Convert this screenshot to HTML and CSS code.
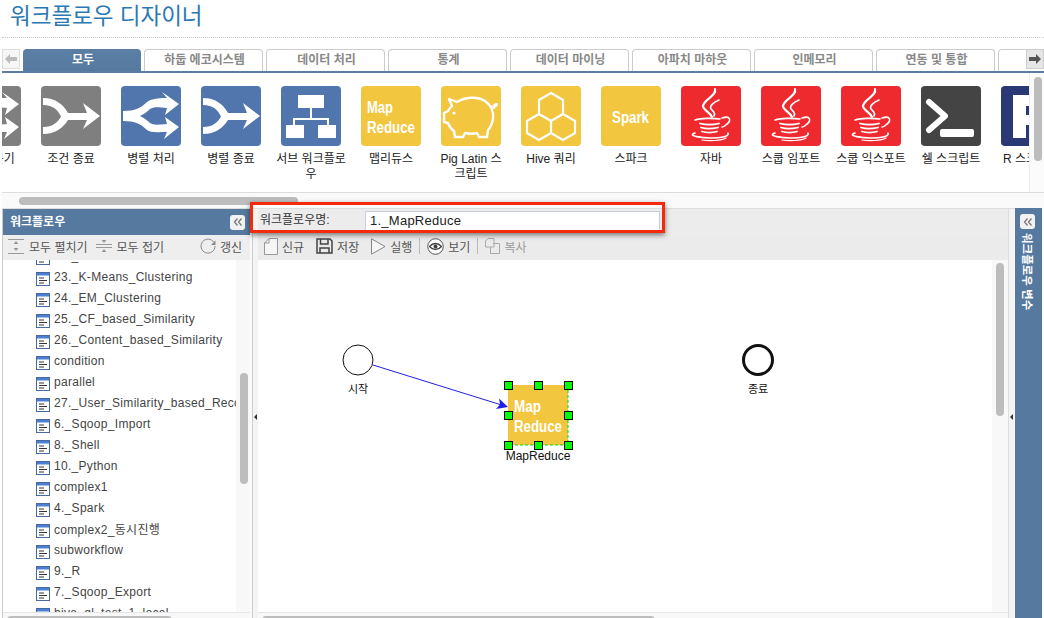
FILE: index.html
```html
<!DOCTYPE html>
<html lang="ko">
<head>
    <meta charset="UTF-8">
    <meta name="viewport" content="width=device-width, initial-scale=1.0">
    <title>워크플로우 디자이너</title>
    <link rel="stylesheet" href="styles.css">
</head>
<body>
    <svg class="defs" width="0" height="0">
        <symbol id="split" viewBox="0 0 60 60">
            <path fill="#fff" d="M2 25C14 25 20 22 26 16C30 13 36 12 46 12L41 6L58 18L44 29L46 22C36 21 32 21 29 23C26 26 23 28 19 30C23 32 26 34 29 37C32 39 36 39 46 38L44 31L58 41L43 53L46 46C36 46 30 47 26 44C20 38 14 35 2 35Z"/>
        </symbol>
        <symbol id="merge" viewBox="0 0 60 60">
            <path fill="#fff" d="M2 12C14 12 22 18 27 27L46 27L42 17L59 30L42 43L46 34L27 34C22 42 14 48 2 48L2 41C12 41 17 36 20 30.500C17 24 12 19 2 19Z"/>
        </symbol>
        <symbol id="java" viewBox="0 0 60 60">
            <g fill="none" stroke="#fff" stroke-linecap="round">
                <path stroke-width="2.200" d="M34 3C36 10 23 13 22 20C22 24 29 26 31 31"/>
                <path stroke-width="1.600" d="M38 14C33 16 28 20 30 23C32 25 35 27 33 30"/>
                <path stroke-width="1.600" d="M14 34C20 32 32 32 39 33"/>
                <path stroke-width="1.800" d="M19 37.500C25 39 32 39 38 37.500"/>
                <path stroke-width="1.800" d="M20 41.500C25 43 31 43 37 41.500"/>
                <path stroke-width="1.800" d="M21 45.500C26 47 31 47 36 45.500"/>
                <path stroke-width="1.600" d="M41 32C50 29 50 35 46 38C44 40 43 41 41 41"/>
                <path stroke-width="1.600" d="M14 47C5 50 22 52 30 52C38 52 49 51 47 47"/>
                <path stroke-width="1.200" d="M21 54C28 55 40 55 45 52"/>
            </g>
        </symbol>
        <symbol id="doc" viewBox="0 0 14 14">
            <rect x="0.5" y="0.5" width="13" height="13" fill="#fff" stroke="#46699f"/>
            <rect x="1" y="1" width="12" height="2.500" fill="#4d7fd0"/>
            <path stroke="#333" d="M3 6H8M3 8.500H11M3 11H8" fill="none"/>
        </symbol>
        <symbol id="collapse" viewBox="0 0 14 14">
            <path fill="none" stroke="#777" stroke-width="1.300" d="M6.500 3.500L3.500 7L6.500 10.500M10.500 3.500L7.500 7L10.500 10.500"/>
        </symbol>
    </svg>

    <header class="page-head">
        <h1 class="page-title">워크플로우 디자이너</h1>
    </header>

    <div class="tabbar">
        <button class="tab-arrow tab-arrow-left">
            <svg width="12" height="10" viewBox="0 0 12 10"><path fill="#bbb" d="M0 5L5 0V3H12V7H5V10Z"/></svg>
        </button>
        <div class="tabs">
            <div class="tab tab-active">모두</div>
            <div class="tab">하둡 에코시스템</div>
            <div class="tab">데이터 처리</div>
            <div class="tab">통계</div>
            <div class="tab">데이터 마이닝</div>
            <div class="tab">아파치 마하웃</div>
            <div class="tab">인메모리</div>
            <div class="tab">연동 및 통합</div>
            <div class="tab"></div>
        </div>
        <button class="tab-arrow tab-arrow-right">
            <svg width="12" height="10" viewBox="0 0 12 10"><path fill="#555" d="M12 5L7 0V3H0V7H7V10Z"/></svg>
        </button>
    </div>

    <section class="palette">
        <div class="palette-view">
            <div class="palette-track">
                <div class="tool">
                    <svg class="tool-icon icon-gray"><use href="#split"/></svg>
                    <span class="tool-label">조건 분기</span>
                </div>
                <div class="tool">
                    <svg class="tool-icon icon-gray"><use href="#merge"/></svg>
                    <span class="tool-label">조건 종료</span>
                </div>
                <div class="tool">
                    <svg class="tool-icon icon-blue"><use href="#split"/></svg>
                    <span class="tool-label">병렬 처리</span>
                </div>
                <div class="tool">
                    <svg class="tool-icon icon-blue"><use href="#merge"/></svg>
                    <span class="tool-label">병렬 종료</span>
                </div>
                <div class="tool">
                    <svg class="tool-icon icon-blue" viewBox="0 0 60 60">
                        <path fill="#fff" d="M17 9H43V22H17ZM5 39H23V52H5ZM37 39H55V52H37Z"/>
                        <path fill="none" stroke="#fff" stroke-width="2" d="M30 22V33M13 39V33H47V39"/>
                    </svg>
                    <span class="tool-label">서브 워크플로우</span>
                </div>
                <div class="tool">
                    <svg class="tool-icon icon-yellow" viewBox="0 0 60 60">
                        <text class="icon-text" x="6" y="27" textLength="26" lengthAdjust="spacingAndGlyphs">Map</text>
                        <text class="icon-text" x="6" y="47" textLength="48" lengthAdjust="spacingAndGlyphs">Reduce</text>
                    </svg>
                    <span class="tool-label">맵리듀스</span>
                </div>
                <div class="tool">
                    <svg class="tool-icon icon-yellow" viewBox="0 0 60 60">
                        <path fill="none" stroke="#fff" stroke-width="2.400" stroke-linejoin="round" d="M8 13L16 16C24 11 36 10 44 15C50 19 53 26 52 33C51 38 49 42 47 44L46 51H38L36 47C32 48 28 48 24 47L22 51H14L13 45C10 43 8 40 7 37L3 36V27L7 25C8 23 10 21 11 20Z"/>
                        <path fill="none" stroke="#fff" stroke-width="2" d="M50 20C53 22 56 21 56 18C54 18 52 19 53 23"/>
                        <circle cx="13" cy="27" r="1.600" fill="#fff"/>
                    </svg>
                    <span class="tool-label">Pig Latin 스크립트</span>
                </div>
                <div class="tool">
                    <svg class="tool-icon icon-yellow" viewBox="0 0 60 60">
                        <path fill="none" stroke="#fff" stroke-width="2.200" d="M30 7L42 14V28L30 35L18 28V14ZM18 28L30 35V47L18 54L6 47V35ZM42 28L54 35V47L42 54L30 47V35Z"/>
                    </svg>
                    <span class="tool-label">Hive 쿼리</span>
                </div>
                <div class="tool">
                    <svg class="tool-icon icon-yellow" viewBox="0 0 60 60">
                        <text class="icon-text" x="11" y="37" textLength="37" lengthAdjust="spacingAndGlyphs">Spark</text>
                    </svg>
                    <span class="tool-label">스파크</span>
                </div>
                <div class="tool">
                    <svg class="tool-icon icon-red"><use href="#java"/></svg>
                    <span class="tool-label">자바</span>
                </div>
                <div class="tool">
                    <svg class="tool-icon icon-red"><use href="#java"/></svg>
                    <span class="tool-label">스쿱 임포트</span>
                </div>
                <div class="tool">
                    <svg class="tool-icon icon-red"><use href="#java"/></svg>
                    <span class="tool-label">스쿱 익스포트</span>
                </div>
                <div class="tool">
                    <svg class="tool-icon icon-dark" viewBox="0 0 60 60">
                        <path fill="none" stroke="#fff" stroke-width="6" stroke-linecap="round" stroke-linejoin="round" d="M8 16L24 30L8 44"/>
                        <rect x="19" y="43" width="34" height="8" rx="2" fill="#fff"/>
                    </svg>
                    <span class="tool-label">쉘 스크립트</span>
                </div>
                <div class="tool">
                    <svg class="tool-icon icon-navy" viewBox="0 0 60 60">
                        <path fill="#fff" d="M12 9H40C48 9 52 15 52 24C52 32 48 36 44 38L54 52H40L31 39H25V52H12ZM25 20V29H34C38 29 38 20 34 20Z"/>
                    </svg>
                    <span class="tool-label">R 스크립트</span>
                </div>
            </div>
            <div class="palette-vbar"><div class="palette-vthumb"></div></div>
        </div>
        <div class="palette-hbar"><div class="palette-hthumb"></div></div>
    </section>

    <div class="workspace">
        <aside class="tree-panel">
            <div class="panel-head">
                <span class="panel-title">워크플로우</span>
                <button class="panel-toggle"><svg width="14" height="14"><use href="#collapse"/></svg></button>
            </div>
            <div class="tree-tools">
                <span class="tool-btn">
                    <svg class="tree-tool-icon" viewBox="0 0 16 16">
                        <path fill="none" stroke="#999" d="M0 1.500H16M0 15.500H16"/>
                        <path fill="#999" d="M8 3L10.500 6H5.500ZM8 13L5.500 10H10.500Z"/>
                    </svg>
                    모두 펼치기
                </span>
                <span class="tool-btn">
                    <svg class="tree-tool-icon" viewBox="0 0 16 16">
                        <path fill="none" stroke="#999" d="M0 6.500H16M0 9.500H16"/>
                        <path fill="#999" d="M8 5L5.500 2H10.500ZM8 11L10.500 14H5.500Z"/>
                    </svg>
                    모두 접기
                </span>
                <span class="tool-btn tool-btn-end">
                    <svg class="tree-tool-icon" viewBox="0 0 16 16">
                        <path fill="none" stroke="#888" d="M14 4.500A7 7 0 1 0 15 8"/>
                        <path fill="#888" d="M15.500 2.500V7H11Z"/>
                    </svg>
                    갱신
                </span>
            </div>
            <div class="tree-body">
                <ul class="tree-list">
                    <li class="tree-row"><svg class="doc-icon"><use href="#doc"/></svg>22._Hierarchical</li>
                    <li class="tree-row"><svg class="doc-icon"><use href="#doc"/></svg>23._K-Means_Clustering</li>
                    <li class="tree-row"><svg class="doc-icon"><use href="#doc"/></svg>24._EM_Clustering</li>
                    <li class="tree-row"><svg class="doc-icon"><use href="#doc"/></svg>25._CF_based_Similarity</li>
                    <li class="tree-row"><svg class="doc-icon"><use href="#doc"/></svg>26._Content_based_Similarity</li>
                    <li class="tree-row"><svg class="doc-icon"><use href="#doc"/></svg>condition</li>
                    <li class="tree-row"><svg class="doc-icon"><use href="#doc"/></svg>parallel</li>
                    <li class="tree-row"><svg class="doc-icon"><use href="#doc"/></svg>27._User_Similarity_based_Recommendation</li>
                    <li class="tree-row"><svg class="doc-icon"><use href="#doc"/></svg>6._Sqoop_Import</li>
                    <li class="tree-row"><svg class="doc-icon"><use href="#doc"/></svg>8._Shell</li>
                    <li class="tree-row"><svg class="doc-icon"><use href="#doc"/></svg>10._Python</li>
                    <li class="tree-row"><svg class="doc-icon"><use href="#doc"/></svg>complex1</li>
                    <li class="tree-row"><svg class="doc-icon"><use href="#doc"/></svg>4._Spark</li>
                    <li class="tree-row"><svg class="doc-icon"><use href="#doc"/></svg>complex2_동시진행</li>
                    <li class="tree-row"><svg class="doc-icon"><use href="#doc"/></svg>subworkflow</li>
                    <li class="tree-row"><svg class="doc-icon"><use href="#doc"/></svg>9._R</li>
                    <li class="tree-row"><svg class="doc-icon"><use href="#doc"/></svg>7._Sqoop_Export</li>
                    <li class="tree-row"><svg class="doc-icon"><use href="#doc"/></svg>hive_ql_test_1_local</li>
                </ul>
                <div class="tree-vbar"><div class="tree-vthumb"></div></div>
            </div>
            <div class="tree-hbar"><div class="tree-hthumb"></div></div>
        </aside>

        <div class="splitter"><span class="splitter-arrow"></span></div>

        <main class="editor">
            <div class="name-bar">
                <label class="name-label">워크플로우명:</label>
                <input class="name-input" value="1._MapReduce">
            </div>
            <div class="edit-tools">
                <span class="edit-btn">
                    <svg width="14" height="17" viewBox="0 0 14 17"><path fill="#f6f6f6" stroke="#999" d="M5 .5H13.500V16.500H.5V5ZM5 .5V5H.5"/></svg>
                    신규
                </span>
                <span class="edit-btn">
                    <svg width="17" height="16" viewBox="0 0 17 16"><path fill="none" stroke="#444" stroke-width="1.500" d="M1 1H14L16 3V15H1ZM4.500 1V6H12V1M4 15V10H13V15"/></svg>
                    저장
                </span>
                <span class="edit-btn">
                    <svg width="15" height="17" viewBox="0 0 15 17"><path fill="#f6f6f6" stroke="#888" d="M.5 .8L14 8.500L.5 16.200Z"/></svg>
                    실행
                </span>
                <span class="edit-sep"></span>
                <span class="edit-btn">
                    <svg width="17" height="17" viewBox="0 0 17 17">
                        <circle cx="8.500" cy="8.500" r="7.800" fill="#fff" stroke="#555"/>
                        <path fill="none" stroke="#444" stroke-width="1.300" d="M2.500 8.500C6 4.500 11 4.500 14.500 8.500C11 12.500 6 12.500 2.500 8.500Z"/>
                        <circle cx="8.500" cy="8.500" r="2" fill="#444"/>
                    </svg>
                    보기
                </span>
                <span class="edit-sep"></span>
                <span class="edit-btn edit-btn-off">
                    <svg width="15" height="16" viewBox="0 0 15 16"><path fill="none" stroke="#aaa" d="M3 .5H9V9H.5V3ZM8 5.500H14.500V15.500H5.500V9"/></svg>
                    복사
                </span>
            </div>
            <div class="canvas">
                <svg class="diagram" viewBox="258 260 734 352">
                    <path class="edge" d="M373 365L500 404.500"/>
                    <path class="edge-head" d="M508 407L496 409L500 404.500L499 398.500Z"/>
                    <circle class="node-start" cx="358" cy="360" r="15"/>
                    <text class="node-label" x="358" y="393">시작</text>
                    <circle class="node-end" cx="758" cy="360" r="14.500"/>
                    <text class="node-label" x="758" y="393">종료</text>
                    <rect class="node-box" x="508" y="385" width="60" height="60"/>
                    <path class="node-dash" d="M568 385V445H508"/>
                    <text class="node-box-text" x="514" y="412" textLength="27" lengthAdjust="spacingAndGlyphs">Map</text>
                    <text class="node-box-text" x="514" y="432" textLength="48" lengthAdjust="spacingAndGlyphs">Reduce</text>
                    <rect class="handle" x="504.500" y="381.500" width="8" height="8"/>
                    <rect class="handle" x="534.500" y="381.500" width="8" height="8"/>
                    <rect class="handle" x="564.500" y="381.500" width="8" height="8"/>
                    <rect class="handle" x="504.500" y="411.500" width="8" height="8"/>
                    <rect class="handle" x="564.500" y="411.500" width="8" height="8"/>
                    <rect class="handle" x="504.500" y="441.500" width="8" height="8"/>
                    <rect class="handle" x="534.500" y="441.500" width="8" height="8"/>
                    <rect class="handle" x="564.500" y="441.500" width="8" height="8"/>
                    <text class="node-name" x="538" y="460">MapReduce</text>
                </svg>
                <div class="canvas-vbar"><div class="canvas-vthumb"></div></div>
            </div>
            <div class="canvas-hbar"><div class="canvas-hthumb"></div></div>
        </main>

        <div class="splitter splitter-right"><span class="splitter-arrow"></span></div>

        <aside class="var-panel">
            <button class="panel-toggle"><svg width="14" height="14"><use href="#collapse"/></svg></button>
            <span class="var-title">워크플로우 변수</span>
        </aside>
    </div>

    <div class="highlight"></div>
</body>
</html>
```

FILE: styles.css
```css
* {
    box-sizing: border-box;
    font-family: "Liberation Sans", "Noto Sans CJK KR", sans-serif;
}
html, body {
    margin: 0;
    height: 618px;
    overflow: hidden;
    background: #fff;
}
.defs {
    position: absolute;
}
button {
    padding: 0;
    cursor: pointer;
}

/* title */
.page-head {
    height: 38px;
    margin: 0 0 0 2px;
    padding-left: 8px;
    border-bottom: 1px dotted #ccc;
}
.page-title {
    margin: 0;
    font-size: 22.5px;
    line-height: 34px;
    font-weight: normal;
    color: #2b78b3;
}

/* tabs */
.tabbar {
    display: flex;
    height: 35px;
    margin-left: 2px;
    padding-top: 11px;
    border-bottom: 2px solid #5a7da3;
}
.tab-arrow {
    flex: none;
    width: 18px;
    height: 20px;
    border: 1px solid #ddd;
    background: #f0f0f0;
    display: flex;
    align-items: center;
    justify-content: center;
}
.tab-arrow-left {
    margin-right: 3px;
    background: #f6f6f6;
}
.tab-arrow-right {
    border-color: #ccc;
    background: #e6e6e6;
}
.tabs {
    flex: 1;
    display: flex;
    gap: 3px;
    overflow: hidden;
}
.tab {
    flex: none;
    width: 119px;
    height: 22px;
    padding-left: 2px;
    border: 1px solid #ccc;
    border-bottom: none;
    border-radius: 4px 4px 0 0;
    font-size: 12px;
    font-weight: bold;
    line-height: 20px;
    text-align: center;
    color: #888;
    background: #fff;
}
.tab-active {
    width: 118px;
    border-color: #5a7da3;
    background: linear-gradient(#5b7ea5, #567a9f);
    color: #fff;
}

/* palette */
.palette {
    margin-left: 2px;
    height: 135px;
    background: #fafafa;
}
.palette-view {
    display: flex;
    height: 120px;
    background: #fff;
    border-bottom: 1px solid #ddd;
}
.palette-track {
    flex: 1;
    min-width: 0;
    display: flex;
    overflow: hidden;
    padding-top: 13px;
}
.tool {
    flex: none;
    width: 80px;
    display: flex;
    flex-direction: column;
    align-items: center;
}
.tool:first-child {
    margin-left: -51px;
}
.tool-icon {
    width: 60px;
    height: 60px;
    border-radius: 4px;
}
.icon-gray { background: #7f7f7f; }
.icon-blue { background: #5176ae; }
.icon-yellow { background: #f2c63e; }
.icon-red { background: #ee2a2f; }
.icon-dark { background: #444; }
.icon-navy { background: #2a3875; }
.icon-text {
    font-size: 17px;
    font-weight: bold;
    fill: #fff;
}
.tool-label {
    width: 70px;
    margin-top: 6px;
    font-size: 12px;
    line-height: 15px;
    text-align: center;
    color: #222;
}
.palette-vbar {
    flex: none;
    width: 15px;
    padding: 4px 3px 0 4px;
    background: #fbfbfb;
    border-left: 1px solid #eee;
}
.palette-vthumb {
    width: 8px;
    height: 84px;
    border-radius: 4px;
    background: #bdbdbd;
}
.palette-hbar {
    height: 15px;
    padding: 4px 0 0 17px;
}
.palette-hthumb {
    width: 279px;
    height: 8px;
    border-radius: 4px;
    background: #bdbdbd;
}

/* lower part */
.workspace {
    display: flex;
    height: 410px;
    margin-left: 2px;
    border-top: 1px solid #ddd;
    background: #fafafa;
    width: 1040px;
}
.tree-panel {
    flex: none;
    width: 248px;
    border-left: 1px solid #ccc;
    display: flex;
    flex-direction: column;
}
.panel-head {
    flex: none;
    height: 26px;
    padding: 0 5px 0 7px;
    display: flex;
    align-items: center;
    justify-content: space-between;
    background: #55799f;
    font-size: 12px;
    font-weight: bold;
    color: #fff;
}
.panel-title {
    margin-bottom: 4px;
}
.panel-toggle {
    width: 15px;
    height: 15px;
    border: none;
    border-radius: 3px;
    background: #f2f2f2;
    display: flex;
    align-items: center;
    justify-content: center;
}
.tree-tools {
    flex: none;
    height: 25px;
    display: flex;
    align-items: center;
    padding: 0 8px 3px 5px;
    gap: 8px;
    background: #eee;
}
.tool-btn {
    display: flex;
    align-items: center;
    gap: 5px;
    font-size: 12px;
    color: #555;
}
.tool-btn-end {
    margin-left: auto;
    gap: 4px;
}
.tree-tool-icon {
    width: 16px;
    height: 16px;
}
.tree-body {
    flex: none;
    height: 352px;
    display: flex;
    background: #fff;
    overflow: hidden;
}
.tree-list {
    flex: none;
    width: 233px;
    margin: -15px 0 0;
    padding: 0 0 0 33px;
    list-style: none;
    overflow: hidden;
}
.tree-row {
    display: flex;
    align-items: center;
    gap: 4px;
    height: 21px;
    font-size: 12px;
    letter-spacing: 0.3px;
    color: #444;
    white-space: nowrap;
}
.doc-icon {
    flex: none;
    width: 14px;
    height: 14px;
    margin-top: 5px;
}
.tree-vbar {
    flex: none;
    width: 14px;
    padding: 113px 0 0 4px;
    background: #f8f8f8;
}
.tree-vthumb {
    width: 8px;
    height: 111px;
    border-radius: 4px;
    background: #bdbdbd;
}
.tree-hbar, .canvas-hbar {
    flex: none;
    height: 6px;
    padding: 3px 0 0 4px;
    overflow: hidden;
    background: #f8f8f8;
    border-top: 1px solid #e6e6e6;
}
.tree-hthumb, .canvas-hthumb {
    width: 165px;
    height: 8px;
    border-radius: 4px;
    background: #bdbdbd;
}
.canvas-hthumb {
    width: 393px;
}
.splitter {
    flex: none;
    width: 6px;
    margin-left: 2px;
    border-left: 1px solid #ccc;
    background: #f4f4f4;
    display: flex;
    padding: 205px 0 0 1px;
}
.splitter-right {
    margin-left: 0;
    width: 7px;
    border-left-color: #ddd;
}
.splitter-arrow {
    width: 0;
    height: 6px;
    border: 3px solid transparent;
    border-right: 3px solid #333;
    border-left: none;
}
.editor {
    flex: none;
    width: 750px;
    display: flex;
    flex-direction: column;
}
.name-bar {
    flex: none;
    height: 26px;
    padding: 2px 0 0 2px;
    display: flex;
    background: #ececec;
}
.name-label {
    width: 105px;
    font-size: 12px;
    line-height: 18px;
    color: #333;
}
.name-input {
    width: 295px;
    height: 20px;
    padding: 0 4px 1px;
    border: 1px solid #c8cde0;
    font-size: 13px;
    letter-spacing: 0.25px;
    color: #222;
    background: #fff;
    outline: none;
}
.edit-tools {
    flex: none;
    height: 25px;
    display: flex;
    align-items: center;
    padding: 0 0 3px 6px;
    gap: 12px;
    background: #ebebeb;
}
.edit-btn {
    display: flex;
    align-items: center;
    gap: 4px;
    font-size: 12px;
    color: #555;
}
.edit-btn-off {
    color: #999;
}
.edit-sep {
    width: 1px;
    height: 16px;
    margin: 0 -5px;
    background: #bbb;
}
.canvas {
    flex: none;
    height: 352px;
    display: flex;
    background: #fff;
    overflow: hidden;
}
.diagram {
    flex: none;
    width: 734px;
    height: 352px;
}
.edge {
    fill: none;
    stroke: #2020e8;
    stroke-width: 1;
}
.edge-head {
    fill: #2020e8;
}
.node-start {
    fill: #fff;
    stroke: #111;
    stroke-width: 1;
}
.node-end {
    fill: #fff;
    stroke: #111;
    stroke-width: 3;
}
.node-label {
    font-size: 11px;
    text-anchor: middle;
    fill: #111;
}
.node-box {
    fill: #f2c63e;
}
.node-dash {
    fill: none;
    stroke: #00e000;
    stroke-dasharray: 3 2;
}
.node-box-text {
    font-size: 16px;
    font-weight: bold;
    fill: #fff;
}
.handle {
    fill: #00ff00;
    stroke: #000;
    stroke-width: 1;
}
.node-name {
    font-size: 12px;
    text-anchor: middle;
    fill: #111;
}
.canvas-vbar {
    flex: none;
    width: 16px;
    padding: 3px 0 0 4px;
    background: #f8f8f8;
}
.canvas-vthumb {
    width: 8px;
    height: 153px;
    border-radius: 4px;
    background: #bdbdbd;
}
.var-panel {
    flex: none;
    width: 27px;
    margin-top: -1px;
    padding: 6px 0 0 5px;
    background: #55799f;
}
.var-title {
    display: block;
    margin: 4px 0 0 0;
    writing-mode: vertical-rl;
    text-orientation: sideways;
    font-size: 11.5px;
    font-weight: bold;
    color: #fff;
}

/* red marker over the name bar */
.highlight {
    position: absolute;
    left: 250px;
    top: 202px;
    width: 415px;
    height: 31px;
    border: 3px solid #f52a0a;
    box-shadow: 0 2px 5px rgba(0, 0, 0, 0.5);
}
```
